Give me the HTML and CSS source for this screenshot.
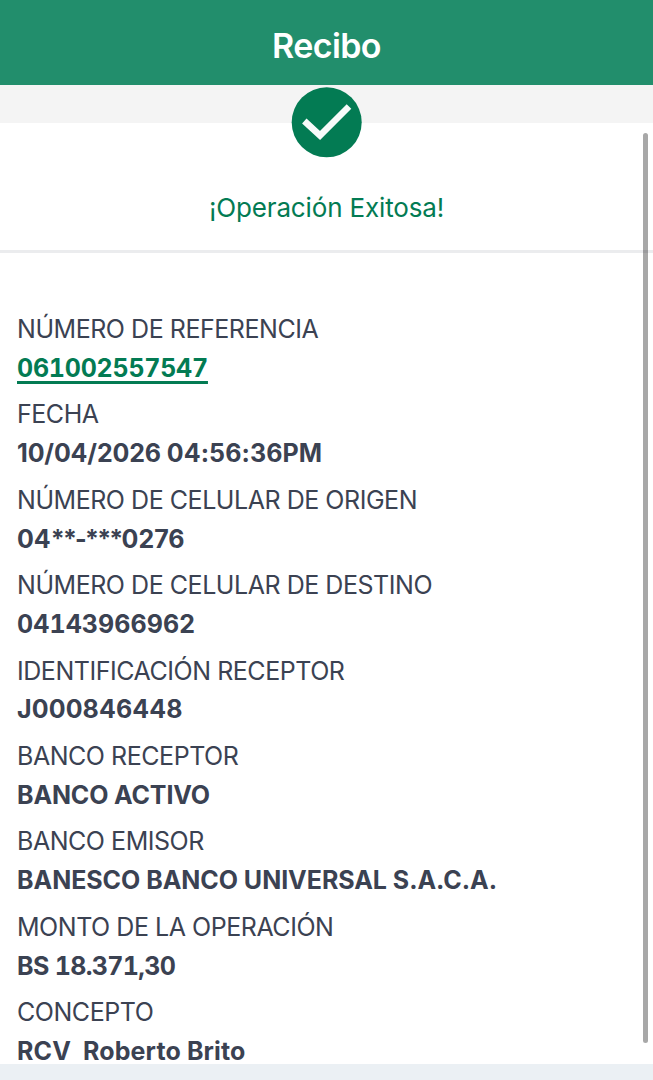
FILE: index.html
```html
<!DOCTYPE html>
<html lang="es">
<head>
    <meta charset="UTF-8">
    <meta name="viewport" content="width=device-width, initial-scale=1.0">
    <title>Recibo</title>
    <link rel="stylesheet" href="styles.css">
</head>
<body>
    <header class="header">
        <h1>Recibo</h1>
    </header>

    <main class="receipt">
        <div class="status">
            <svg class="check" viewBox="0 0 72 72">
                <circle cx="35.700" cy="36.300" r="35" fill="#037b53"/>
                <path d="M13.300 35L29 49.500L58 20.500" fill="none" stroke="#f7fbfa" stroke-width="6.500"/>
            </svg>
            <p>¡Operación Exitosa!</p>
        </div>

        <dl class="details">
            <dt>NÚMERO DE REFERENCIA</dt>
            <dd><a class="reference">061002557547</a></dd>
            <dt>FECHA</dt>
            <dd class="date">10/04/2026 <span class="time">04:56:36PM</span></dd>
            <dt>NÚMERO DE CELULAR DE ORIGEN</dt>
            <dd>04<span class="mask">**-***</span>0276</dd>
            <dt>NÚMERO DE CELULAR DE DESTINO</dt>
            <dd class="number">04143966962</dd>
            <dt>IDENTIFICACIÓN RECEPTOR</dt>
            <dd class="receiver">J000846448</dd>
            <dt>BANCO RECEPTOR</dt>
            <dd class="bank">BANCO ACTIVO</dd>
            <dt>BANCO EMISOR</dt>
            <dd class="issuer">BANESCO BANCO UNIVERSAL S.A.C.A.</dd>
            <dt>MONTO DE LA OPERACIÓN</dt>
            <dd class="amount">BS 18.371,30</dd>
            <dt>CONCEPTO</dt>
            <dd class="concept">RCV&nbsp; Roberto Brito</dd>
        </dl>
        <div class="scrollbar"></div>
    </main>
</body>
</html>
```
FILE: styles.css
```css
* {
    box-sizing: border-box;
}
body {
    font-family: Inter, "Liberation Sans", sans-serif;
    background: #ebf0f4;
    margin: 0;
    height: 1080px;
    overflow: hidden;
    color: #3b4252;
}
.header {
    height: 85px;
    background: #228e6c;
    display: flex;
    align-items: center;
    justify-content: center;
    padding-top: 6px;
}
h1 {
    margin: 0;
    color: white;
    font-size: 34px;
    font-weight: 600;
    letter-spacing: -0.6px;
}
.receipt {
    position: relative;
    height: 979px;
    background: white;
}
.status {
    height: 168px;
    border-bottom: 3px solid #ebecee;
    background: linear-gradient(#f4f4f4 38px, white 38px);
    text-align: center;
    padding-top: 1px;
}
.check {
    display: block;
    width: 72px;
    height: 72px;
    margin: 0 auto;
}
.status p {
    margin: 34px 0 0;
    font-size: 26px;
    line-height: 32px;
    letter-spacing: -0.15px;
    color: #037b53;
}
.details {
    margin: 0;
    padding: 57px 17px 0;
    font-size: 25px;
}
dt {
    height: 38.9px;
    line-height: 39px;
    font-weight: 400;
    letter-spacing: -0.46px;
}
dd {
    height: 46.5px;
    margin: 0;
    line-height: 39px;
    font-weight: 700;
}
.reference {
    color: #037b53;
    text-decoration: underline;
    text-decoration-thickness: 2.5px;
    text-underline-offset: 4px;
    letter-spacing: -0.25px;
    font-variant-numeric: tabular-nums;
}
.date {
    letter-spacing: -0.15px;
}
.time {
    letter-spacing: 0.1px;
}
.number {
    letter-spacing: 0.05px;
    font-variant-numeric: tabular-nums;
}
.mask {
    letter-spacing: -1.8px;
}
.receiver {
    letter-spacing: 0.1px;
}
.bank {
    letter-spacing: -0.15px;
}
.issuer {
    letter-spacing: -0.04px;
}
.amount {
    letter-spacing: -0.65px;
    font-variant-numeric: tabular-nums;
}
.concept {
    height: 33px;
    letter-spacing: 0.12px;
}
.scrollbar {
    position: absolute;
    top: 48px;
    right: 5px;
    width: 5px;
    height: 910px;
    border-radius: 3px;
    background: rgba(0, 0, 0, 0.34);
}
```
